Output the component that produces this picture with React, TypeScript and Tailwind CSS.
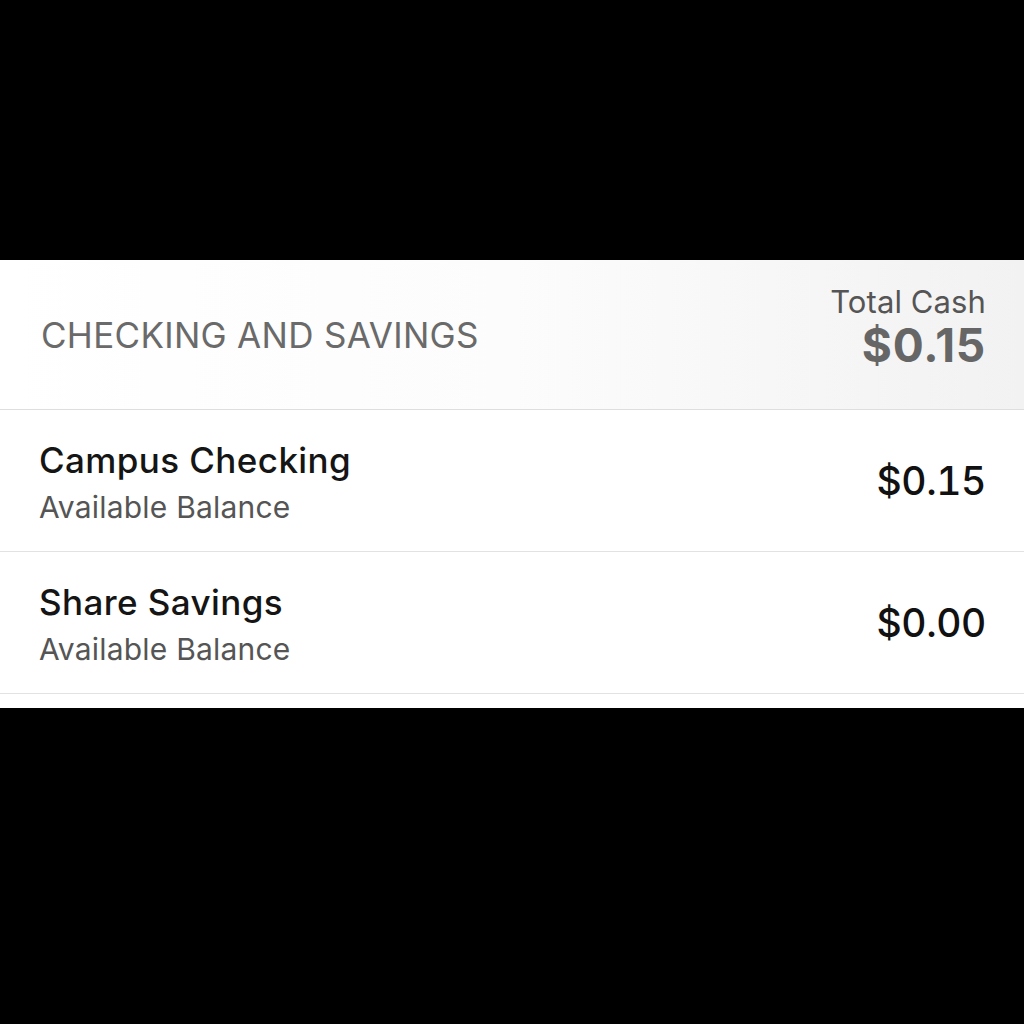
import React from "react";

const rows = [
  { name: "Campus Checking", amount: "$0.15" },
  { name: "Share Savings", amount: "$0.00" },
];

export default function App() {
  return (
    <div className="flex h-[1024px] w-[1024px] flex-col bg-black" style={{ fontFamily: "Inter, 'Liberation Sans', sans-serif" }}>
      <div className="h-[260px] shrink-0" />
      <div className="flex h-[448px] shrink-0 flex-col bg-white">
        <div className="flex h-[150px] items-center justify-between border-b border-[#dedede] bg-gradient-to-r from-white via-[#fcfcfc] to-[#f2f2f2] pl-[41px] pr-[38px]">
          <div className="pt-[2px] text-[35px] leading-none tracking-[0.3px] text-[#6a6a6a]">CHECKING AND SAVINGS</div>
          <div className="flex flex-col items-end pb-[14px]">
            <div className="text-[31px] leading-[34px] tracking-[0.1px] text-[#555555]">Total Cash</div>
            <div className="text-[46px] font-bold leading-[52px] tracking-[0.8px] text-[#666666]">$0.15</div>
          </div>
        </div>
        {rows.map((r) => (
          <div key={r.name} className="flex h-[142px] items-center justify-between border-b border-[#e2e2e2] pl-[39px] pr-[38px]">
            <div className="flex flex-col pt-[6px]">
              <div className="text-[35px] font-medium leading-[42px] tracking-[0.4px] text-[#151515]">{r.name}</div>
              <div className="mt-[4px] text-[30px] leading-[44px] tracking-[0.2px] text-[#555555]">Available Balance</div>
            </div>
            <div className="text-[39px] font-medium leading-none tracking-[-0.4px] text-[#111111] tabular-nums">{r.amount}</div>
          </div>
        ))}
      </div>
    </div>
  );
}
